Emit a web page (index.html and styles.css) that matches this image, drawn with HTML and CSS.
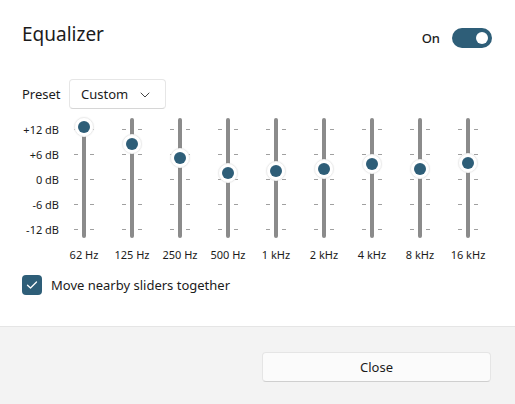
FILE: index.html
```html
<!DOCTYPE html>
<html lang="en">

<head>
  <meta charset="UTF-8">
  <title>Equalizer</title>
  <link rel="stylesheet" href="styles.css">
</head>

<body>
  <div class="dialog">
    <div class="content">
      <!-- Title and on/off switch -->
      <div class="header">
        <h1 class="title">Equalizer</h1>
        <div class="switch-group">
          <span class="switch-label">On</span>
          <span class="switch"><span class="switch-knob"></span></span>
        </div>
      </div>

      <!-- Preset picker -->
      <div class="preset-row">
        <span class="preset-label">Preset</span>
        <div class="dropdown">
          <span>Custom</span>
          <svg class="chevron" width="10" height="6" viewBox="0 0 10 6">
            <path d="M1 1 L5 5 L9 1" fill="none" stroke="#444" stroke-width="1" stroke-linecap="round" stroke-linejoin="round"/>
          </svg>
        </div>
      </div>

      <!-- Bands -->
      <div class="eq">
        <div class="db-scale">
          <span>+12 dB</span>
          <span>+6 dB</span>
          <span>0 dB</span>
          <span>-6 dB</span>
          <span>-12 dB</span>
        </div>
        <div class="bands" id="bands"></div>
      </div>
      <div class="freqs">
        <span class="freq-spacer"></span>
        <span>62 Hz</span>
        <span>125 Hz</span>
        <span>250 Hz</span>
        <span>500 Hz</span>
        <span>1 kHz</span>
        <span>2 kHz</span>
        <span>4 kHz</span>
        <span>8 kHz</span>
        <span>16 kHz</span>
      </div>

      <label class="check-row">
        <span class="checkbox">
          <svg width="12" height="10" viewBox="0 0 12 10">
            <path d="M1.5 5.2 L4.5 8 L10.5 2" fill="none" stroke="#fff" stroke-width="1.3" stroke-linecap="round" stroke-linejoin="round"/>
          </svg>
        </span>
        <span>Move nearby sliders together</span>
      </label>
    </div>

    <div class="footer">
      <button class="close-button">Close</button>
    </div>
  </div>

  <script>
    // offset of each thumb from the top of its track, in px
    const levels = [8.7, 25.7, 39.7, 55.3, 52.7, 50.7, 46.3, 50.7, 44.7];
    const bands = document.getElementById('bands');

    levels.forEach((top) => {
      const band = document.createElement('div');
      band.className = 'band';

      const track = document.createElement('div');
      track.className = 'track';
      band.appendChild(track);

      for (let i = 0; i < 5; i++) {
        const tick = document.createElement('div');
        tick.className = 'ticks';
        tick.style.top = (11 + i * 25) + 'px';
        band.appendChild(tick);
      }

      const thumb = document.createElement('div');
      thumb.className = 'thumb';
      thumb.style.top = (top - 10) + 'px';
      band.appendChild(thumb);

      bands.appendChild(band);
    });
  </script>
</body>

</html>
```

FILE: styles.css
```css
body {
  margin: 0;
  font-family: "Noto Sans", sans-serif;
  color: #1b1b1b;
  background: #ffffff;
}

.dialog {
  width: 515px;
  height: 404px;
  display: flex;
  flex-direction: column;
}

.content {
  height: 326px;
  box-sizing: border-box;
  padding: 20px 23px 0 22px;
}

.header {
  display: flex;
  justify-content: space-between;
  align-items: flex-start;
  height: 28px;
}

.title {
  margin: 0;
  font-size: 19px;
  font-weight: 400;
  line-height: 28px;
}

.switch-group {
  display: flex;
  align-items: center;
  gap: 12px;
  margin-top: 8px;
}

.switch-label {
  font-size: 13px;
  font-weight: 500;
}

.switch {
  width: 40px;
  height: 20px;
  border-radius: 10px;
  background: #2e5e78;
  display: flex;
  align-items: center;
  justify-content: flex-end;
  padding-right: 4px;
  box-sizing: border-box;
}

.switch-knob {
  width: 12px;
  height: 12px;
  border-radius: 50%;
  background: #ffffff;
}

.preset-row {
  display: flex;
  align-items: center;
  margin-top: 31px;
  height: 30px;
}

.preset-label {
  width: 47px;
  font-size: 13px;
}

.dropdown {
  width: 97px;
  height: 30px;
  box-sizing: border-box;
  border: 1px solid #e6e6e6;
  border-bottom-color: #d6d6d6;
  border-radius: 4px;
  display: flex;
  align-items: center;
  justify-content: space-between;
  padding: 0 15px 0 11px;
  font-size: 13px;
}

.chevron {
  margin-top: 1px;
}

.eq {
  display: flex;
  margin: 9px 0 0 -22px;
}

.db-scale {
  width: 59px;
  margin-top: -1px;
  display: flex;
  flex-direction: column;
  align-items: flex-end;
  font-size: 11px;
}

.db-scale span {
  height: 25px;
  line-height: 25px;
}

.bands {
  display: flex;
  margin-left: 1px;
}

.band {
  position: relative;
  width: 48px;
  height: 120px;
}

.track {
  width: 4px;
  height: 120px;
  margin: 0 auto;
  border-radius: 2px;
  background: #8b8b8b;
}

.ticks {
  position: absolute;
  left: 14px;
  width: 20px;
  height: 1px;
  background: linear-gradient(to right, #a0a0a0 0 4px, transparent 4px 16px, #a0a0a0 16px 20px);
}

.thumb {
  position: absolute;
  left: 14px;
  width: 20px;
  height: 20px;
  box-sizing: border-box;
  border-radius: 50%;
  background: #ffffff;
  border: 1px solid #ededed;
  box-shadow: 0 0 2px rgba(0, 0, 0, 0.06);
  display: flex;
  align-items: center;
  justify-content: center;
}

.thumb::after {
  content: "";
  width: 12px;
  height: 12px;
  border-radius: 50%;
  background: #2e5e78;
}

.freqs {
  display: flex;
  margin: 5px 0 0 -22px;
  font-size: 11px;
  line-height: 16px;
}

.freq-spacer {
  width: 60px;
}

.freqs span:not(.freq-spacer) {
  width: 48px;
  text-align: center;
}

.check-row {
  display: flex;
  align-items: center;
  gap: 9px;
  margin-top: 12px;
  font-size: 13px;
}

.checkbox {
  width: 20px;
  height: 20px;
  border-radius: 4px;
  background: #2e5e78;
  display: flex;
  align-items: center;
  justify-content: center;
}

.footer {
  flex-grow: 1;
  background: #f3f3f3;
  border-top: 1px solid #e5e5e5;
  display: flex;
  justify-content: flex-end;
  align-items: flex-start;
  padding: 25px 24px 0 0;
}

.close-button {
  width: 229px;
  height: 30px;
  background: #fbfbfb;
  border: 1px solid #e5e5e5;
  border-bottom-color: #cfcfcf;
  border-radius: 4px;
  font-family: "Noto Sans", sans-serif;
  font-size: 13px;
  color: #1b1b1b;
}
```
